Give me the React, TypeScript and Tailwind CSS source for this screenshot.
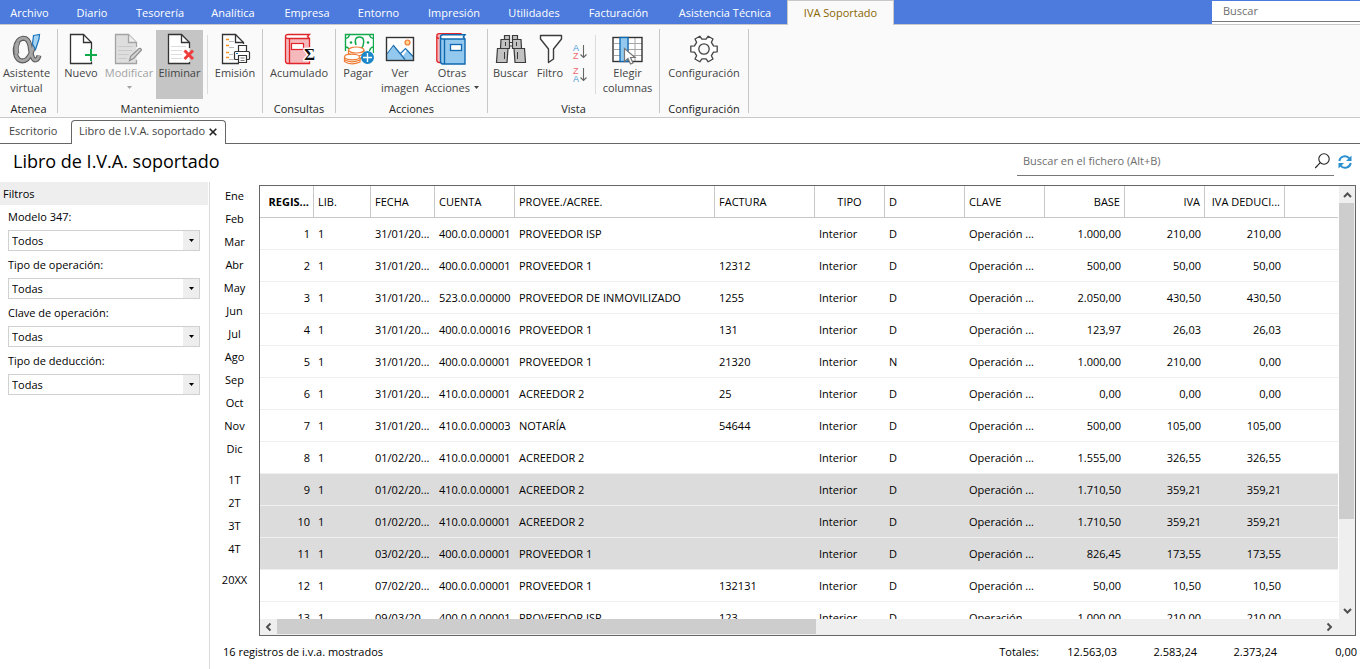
import type { ReactNode } from "react";

const menu: [string, string][] = [
  ["Archivo", "w-[59px]"],
  ["Diario", "w-[66px]"],
  ["Tesorería", "w-[70px]"],
  ["Analítica", "w-[76px]"],
  ["Empresa", "w-[72px]"],
  ["Entorno", "w-[71px]"],
  ["Impresión", "w-[80px]"],
  ["Utilidades", "w-[80px]"],
  ["Facturación", "w-[89px]"],
  ["Asistencia Técnica", "w-[124px]"],
];

const months = ["Ene", "Feb", "Mar", "Abr", "May", "Jun", "Jul", "Ago", "Sep", "Oct", "Nov", "Dic"];
const quarters = ["1T", "2T", "3T", "4T"];

const filters: [string, string, string][] = [
  ["modelo", "Modelo 347:", "Todos"],
  ["operacion", "Tipo de operación:", "Todas"],
  ["clave", "Clave de operación:", "Todas"],
  ["deduccion", "Tipo de deducción:", "Todas"],
];

type Column = { title: string; width: string; align: string };

const columns: Column[] = [
  { title: "REGIS...", width: "w-[54px]", align: "text-right font-bold" },
  { title: "LIB.", width: "w-[57px]", align: "text-left font-normal" },
  { title: "FECHA", width: "w-[64px]", align: "text-left font-normal" },
  { title: "CUENTA", width: "w-[80px]", align: "text-left font-normal" },
  { title: "PROVEE./ACREE.", width: "w-[200px]", align: "text-left font-normal" },
  { title: "FACTURA", width: "w-[100px]", align: "text-left font-normal" },
  { title: "TIPO", width: "w-[70px]", align: "text-center font-normal" },
  { title: "D", width: "w-[80px]", align: "text-left font-normal" },
  { title: "CLAVE", width: "w-[80px]", align: "text-left font-normal" },
  { title: "BASE", width: "w-[80px]", align: "text-right font-normal" },
  { title: "IVA", width: "w-[80px]", align: "text-right font-normal" },
  { title: "IVA DEDUCI...", width: "w-[80px]", align: "text-right font-normal" },
];

const rows: string[][] = [
  ["1", "31/01/20...", "400.0.0.00001", "PROVEEDOR ISP", "", "D", "1.000,00", "210,00", "210,00"],
  ["2", "31/01/20...", "400.0.0.00001", "PROVEEDOR 1", "12312", "D", "500,00", "50,00", "50,00"],
  ["3", "31/01/20...", "523.0.0.00000", "PROVEEDOR DE INMOVILIZADO", "1255", "D", "2.050,00", "430,50", "430,50"],
  ["4", "31/01/20...", "400.0.0.00016", "PROVEEDOR 1", "131", "D", "123,97", "26,03", "26,03"],
  ["5", "31/01/20...", "400.0.0.00001", "PROVEEDOR 1", "21320", "N", "1.000,00", "210,00", "0,00"],
  ["6", "31/01/20...", "410.0.0.00001", "ACREEDOR 2", "25", "D", "0,00", "0,00", "0,00"],
  ["7", "31/01/20...", "410.0.0.00003", "NOTARÍA", "54644", "D", "500,00", "105,00", "105,00"],
  ["8", "01/02/20...", "410.0.0.00001", "ACREEDOR 2", "", "D", "1.555,00", "326,55", "326,55"],
  ["9", "01/02/20...", "410.0.0.00001", "ACREEDOR 2", "", "D", "1.710,50", "359,21", "359,21"],
  ["10", "01/02/20...", "410.0.0.00001", "ACREEDOR 2", "", "D", "1.710,50", "359,21", "359,21"],
  ["11", "03/02/20...", "400.0.0.00001", "PROVEEDOR 1", "", "D", "826,45", "173,55", "173,55"],
  ["12", "07/02/20...", "400.0.0.00001", "PROVEEDOR 1", "132131", "D", "50,00", "10,50", "10,50"],
  ["13", "09/03/20...", "400.0.0.00001", "PROVEEDOR ISP", "123", "D", "1.000,00", "210,00", "210,00"],
];

const selected = ["9", "10", "11"];

function Icon({ children }: { children: ReactNode }) {
  return (
    <svg aria-hidden="true" viewBox="0 0 32 32" className="block size-8 shrink-0" fill="none">
      {children}
    </svg>
  );
}

function AssistantIcon() {
  const loop = "M25 7Q20.500 22 16 26.200Q11.500 29.500 7.500 26.500Q3.800 23 4.300 15.500Q5.500 6 12 5.200Q17.500 5 19 13Q20.500 26.500 24 27Q27 27 28 22.500";
  return (
    <Icon>
      <path d={loop} stroke="#5c5c5c" strokeWidth="5" />
      <path d={loop} stroke="#a6a6a6" strokeWidth="2.800" />
      <path d="M6 21Q4 15 7 9" stroke="#5c5c5c" strokeWidth="5" />
      <path d="M5.800 21Q4 15 6.800 9" stroke="#a6a6a6" strokeWidth="3.600" />
      <path d="M22.500 2.500L28.500 1.500 28 6 24.500 16.500 21.500 11Z" fill="#a5d3f3" stroke="#1b75bb" strokeWidth="1.200" />
    </Icon>
  );
}

function NewIcon() {
  return (
    <Icon>
      <path d="M26.500 16V9.500L18.500 1.500H5.500V30.500H26.500V28.500" fill="#fff" stroke="#333" strokeWidth="1.300" />
      <path d="M18.500 1.500V9.500H26.500" stroke="#333" strokeWidth="1.300" />
      <path d="M20 22H32M26 16V28" stroke="#12a84c" strokeWidth="2" />
    </Icon>
  );
}

function EditIcon() {
  return (
    <Icon>
      <path d="M23.500 14V9.500L15.500 1.500H2.500V30.500H23.500V27" fill="#dedede" stroke="#a3a3a3" strokeWidth="1.300" />
      <path d="M15.500 1.500V9.500H23.500" fill="#eee" stroke="#a3a3a3" strokeWidth="1.300" />
      <path d="M5 13.500H20M5 17.500H19M5 21.500H16M5 25.500H14" stroke="#c9c9c9" />
      <path d="M16.500 27.500l1.200-4.200L26 15.500q1.800-.6 2.500 1.500l-8 8.500z" fill="#d4d4d4" stroke="#8f8f8f" strokeWidth="1.200" />
    </Icon>
  );
}

function DeleteIcon() {
  return (
    <Icon>
      <path d="M25.500 15V9.500L17.500 1.500H4.500V30.500H25.500V29" fill="#fff" stroke="#333" strokeWidth="1.300" />
      <path d="M17.500 1.500V9.500H25.500" stroke="#333" strokeWidth="1.300" />
      <path d="M7 13.500H22M7 17.500H18M7 21.500H18M7 25.500H18" stroke="#dcdcdc" />
      <path d="M20.500 17.500L29 26M29 17.500L20.500 26" stroke="#ef3b3b" strokeWidth="3" />
    </Icon>
  );
}

function PrintIcon() {
  return (
    <Icon>
      <path d="M24.500 11V9.500L16.500 1.500H3.500V30.500H20" fill="#fff" stroke="#333" strokeWidth="1.300" />
      <path d="M16.500 1.500V9.500H24.500" stroke="#333" strokeWidth="1.300" />
      <path d="M7 6.500H10M7 12.500H10M7 19.500H10M7 24.500H10" stroke="#f5921e" strokeWidth="1.300" />
      <path d="M10 8.500H15M10 14.500H15M10 21.500H14M10 26.500H15" stroke="#bbb" />
      <path d="M19.500 18V12.500H27.500V18" fill="#fff" stroke="#333" strokeWidth="1.200" />
      <rect x="15.500" y="18.500" width="15" height="8" rx="1" fill="#fff" stroke="#333" strokeWidth="1.200" />
      <path d="M19.500 22.500H27.500V29.500H19.500Z" fill="#fff" stroke="#333" strokeWidth="1.200" />
      <path d="M21.500 25H25.500M21.500 27.500H25.500" stroke="#777" />
      <path d="M17 20.500H19" stroke="#1b75bb" />
    </Icon>
  );
}

function LedgerIcon() {
  return (
    <Icon>
      <path d="M2.500 4V28q0 2.500 2.500 2.500H26.500V5.500H5Q2.500 5.500 2.500 3.500T5 1.500H26.500L24.500 3.500 26.500 5.500" fill="#f5b9bb" />
      <path d="M26.500 5.500H5Q2.500 5.500 2.500 3.500T5 1.500H26.500L24.500 3.500Z" fill="#fff" />
      <path d="M26.500 14V5.500H5Q2.500 5.500 2.500 3.500T5 1.500H26.500L24.500 3.500 26.500 5.500M2.500 3.500V28q0 2.500 2.500 2.500H26.500V28M6.500 6V30" stroke="#e0262b" strokeWidth="1.300" />
      <rect x="8.500" y="10.500" width="12" height="6" fill="#fff" stroke="#e0262b" strokeWidth="1.200" />
      <text x="21" y="27" fontFamily="Liberation Serif" fontWeight="bold" fontSize="17" fill="#111" stroke="#fff" strokeWidth="2.500" paintOrder="stroke">
        Σ
      </text>
    </Icon>
  );
}

function PayIcon() {
  return (
    <Icon>
      <path d="M3.500 18V1.500H31.500V20" fill="#fff" stroke="#12a84c" strokeWidth="1.400" />
      <path d="M3.500 5.500Q7 5 7.500 1.500M31.500 5.500Q28 5 27.500 1.500M3.500 14Q6 14 7 16M31.500 14Q28.500 14 27.500 18" stroke="#12a84c" strokeWidth="1.400" />
      <path d="M14 12Q11.500 4 17.500 4T21 13L19 16" stroke="#12a84c" strokeWidth="1.500" />
      <circle cx="9" cy="9.500" r="1.300" fill="#12a84c" />
      <circle cx="26" cy="9.500" r="1.300" fill="#12a84c" />
      <g fill="#fff" stroke="#ef7b34" strokeWidth="1.200">
        <path d="M6.500 17V24Q14 29 22 24V17" />
        <path d="M6.500 20.500Q14 26 22 20.500" />
        <ellipse cx="14.300" cy="17" rx="7.700" ry="3" />
        <path d="M2.500 24V28.500Q9 33 18 29V24" />
        <path d="M2.500 26.500Q9 31 18 27" />
        <ellipse cx="10" cy="24" rx="7.500" ry="2.800" />
      </g>
      <circle cx="25.500" cy="24.500" r="6.500" fill="#1b87c9" />
      <path d="M21 24.500H30M25.500 20V29" stroke="#fff" strokeWidth="1.400" />
    </Icon>
  );
}

function ImageIcon() {
  return (
    <Icon>
      <rect x="2.500" y="4.500" width="27" height="23" fill="#fff" />
      <path d="M3 22L10 13 19 23 23.500 16.500 29 23V27H3Z" fill="#93c9ee" />
      <path d="M3 21L9.500 12.500 21 26.500M16.500 20.500L21.500 15.500 29 23.500" stroke="#1b6fb3" strokeWidth="1.200" />
      <circle cx="23.500" cy="9.500" r="2.500" fill="#ffd28a" stroke="#ef7b34" strokeWidth="1.200" />
      <rect x="2.500" y="4.500" width="27" height="23" stroke="#333" strokeWidth="1.400" />
    </Icon>
  );
}

function BooksIcon() {
  return (
    <Icon>
      <path d="M.8 3V27q0 2.500 2.500 2.500H25V.7H3Q.8 .7 .8 3T3 5.500" fill="#f5b9bb" stroke="#e0262b" strokeWidth="1.300" />
      <path d="M4.500 4V28q0 3 2.500 3H29V6H7Q4.500 6 4.500 4" fill="#93c9ee" />
      <path d="M29 6H7Q4.500 6 4.500 4T7 1.800H29L27.300 4Z" fill="#fff" />
      <path d="M29 6H7Q4.500 6 4.500 4T7 1.800H29L27.300 4 29 6V31H7Q4.500 31 4.500 28V4M8.500 6V31" stroke="#1068b0" strokeWidth="1.400" />
      <rect x="14.500" y="11.500" width="11" height="6" fill="#fff" stroke="#1068b0" strokeWidth="1.300" />
    </Icon>
  );
}

function BinocularsIcon() {
  return (
    <Icon>
      <g fill="#c2c2c2" stroke="#3b3b3b" strokeWidth="1.200">
        <path d="M9.500 2.500H14.500V6.500H9.500ZM17.500 2.500H22.500V6.500H17.500Z" />
        <path d="M14 9.500H18V13H14Z" fill="#fff" />
        <path d="M6 6.500H14.500V15.500H5.500ZM17.500 6.500H26L26.500 15.500H17.500Z" />
        <path d="M2.500 15.500H13L12 29.500H1.500ZM19 15.500H29.500L30.500 29.500H20Z" />
      </g>
      <path d="M9.500 19V26M22.500 19V26M10.500 9V13M21.500 9V13" stroke="#3b3b3b" />
    </Icon>
  );
}

function FunnelIcon() {
  return (
    <Icon>
      <path d="M6.500 2.500H27.500V6L19.500 16V26L14.500 29.500V16L6.500 6Z" fill="#fff" stroke="#3b3b3b" strokeWidth="1.400" strokeLinejoin="round" />
    </Icon>
  );
}

function ColumnsIcon() {
  return (
    <Icon>
      <rect x="1" y="4.500" width="29" height="24" fill="#fff" />
      <path d="M2 10.500H30M2 16.500H30M2 22.500H30M16 5V28M23 5V28" stroke="#a6a6a6" />
      <rect x="1" y="4.500" width="29" height="24" stroke="#333" strokeWidth="1.400" />
      <rect x="8" y="4.500" width="8" height="24" fill="#93c9ee" stroke="#1068b0" strokeWidth="1.300" />
      <path d="M12.500 15.500V28.500L16 25.500 18.500 31 21 30 18.500 24.500H23Z" fill="#fff" stroke="#777" strokeWidth="1.200" />
    </Icon>
  );
}

function gearPath() {
  const at = (r: number, deg: number) => {
    const a = (deg * Math.PI) / 180;
    return `${(16 + r * Math.cos(a)).toFixed(1)} ${(16 + r * Math.sin(a)).toFixed(1)}`;
  };
  const teeth = [0, 60, 120, 180, 240, 300].map(
    (d) => `${at(10, d - 18)}L${at(13.5, d - 12)}L${at(13.5, d + 12)}L${at(10, d + 18)}`
  );
  return `M${teeth.join("L")}Z`;
}

function GearIcon() {
  return (
    <Icon>
      <path d={gearPath()} fill="#fff" stroke="#444" strokeWidth="1.300" strokeLinejoin="round" />
      <circle cx="16" cy="16" r="5.200" fill="#fafafa" stroke="#444" strokeWidth="1.300" />
    </Icon>
  );
}

function SortIcon({ top, bottom, topColor, bottomColor }: { top: string; bottom: string; topColor: string; bottomColor: string }) {
  return (
    <svg aria-hidden="true" viewBox="0 0 16 17" className="block h-[17px] w-4" fontFamily="Liberation Sans" fontSize="9">
      <text x="0" y="8" fill={topColor}>{top}</text>
      <text x="0" y="16" fill={bottomColor}>{bottom}</text>
      <path d="M10.500 2V14.500M7.500 11.500L10.500 14.500 13.500 11.500" fill="none" stroke="#666" strokeWidth="1.100" />
    </svg>
  );
}

function Caret({ className }: { className: string }) {
  return (
    <svg aria-hidden="true" viewBox="0 0 5 3" className={className}>
      <path d="M0 0H5L2.500 3Z" fill="currentColor" />
    </svg>
  );
}

function Tool({ icon, width, lines, look = "text-[#444]", caret }: { icon: ReactNode; width: string; lines: string[]; look?: string; caret?: "below" | "inline" }) {
  return (
    <button type="button" className={`flex h-[69px] shrink-0 flex-col items-center pt-[3px] leading-[15px] ${width} ${look}`}>
      {icon}
      {lines.map((line, i) => (
        <span key={line} className="flex items-center whitespace-nowrap">
          {line}
          {caret === "inline" && i === lines.length - 1 && <Caret className="ml-1 h-[3px] w-[5px]" />}
        </span>
      ))}
      {caret === "below" && <Caret className="mt-[6px] h-[3px] w-[5px]" />}
    </button>
  );
}

function Group({ label, children }: { label: string; children: ReactNode }) {
  return (
    <section className="flex">
      <div className="flex flex-col pt-[5px]">
        <div className="flex">{children}</div>
        <h2 className="mt-[2px] text-center leading-[15px] text-[#1e1e1e]">{label}</h2>
      </div>
      <div className="mt-1 h-[84px] w-px bg-[#c8c8c8]" />
    </section>
  );
}

function Divider() {
  return <div className="mt-[5px] h-[59px] w-px bg-[#dcdcdc]" />;
}

function Chevron({ turn }: { turn: string }) {
  return (
    <svg aria-hidden="true" viewBox="0 0 9 6" className={`h-[6px] w-[9px] ${turn}`} fill="none">
      <path d="M1 5L4.500 1.500 8 5" stroke="#505050" strokeWidth="2" />
    </svg>
  );
}

function Ribbon() {
  return (
    <div className="flex h-[93px] shrink-0 border-b border-[#c8c8c8] bg-[#fafafa] text-[11px]">
      <Group label="Atenea">
        <Tool icon={<AssistantIcon />} width="w-[57px] pr-1" lines={["Asistente", "virtual"]} />
      </Group>
      <Group label="Mantenimiento">
        <Tool icon={<NewIcon />} width="w-[46px]" lines={["Nuevo"]} />
        <Tool icon={<EditIcon />} width="w-[52px] pr-0.5" lines={["Modificar"]} look="text-[#a3a3a3]" caret="below" />
        <Tool icon={<DeleteIcon />} width="w-[47px]" lines={["Eliminar"]} look="bg-[#c5c5c5] text-[#444]" />
        <div className="w-1" />
        <Divider />
        <Tool icon={<PrintIcon />} width="w-[54px]" lines={["Emisión"]} />
      </Group>
      <Group label="Consultas">
        <Tool icon={<LedgerIcon />} width="w-[72px]" lines={["Acumulado"]} />
      </Group>
      <Group label="Acciones">
        <Tool icon={<PayIcon />} width="w-[44px]" lines={["Pagar"]} />
        <Tool icon={<ImageIcon />} width="w-[40px]" lines={["Ver", "imagen"]} />
        <Tool icon={<BooksIcon />} width="w-[67px] pr-[3px]" lines={["Otras", "Acciones"]} caret="inline" />
      </Group>
      <Group label="Vista">
        <Tool icon={<BinocularsIcon />} width="w-[45px]" lines={["Buscar"]} />
        <Tool icon={<FunnelIcon />} width="w-[34px]" lines={["Filtro"]} />
        <div className="flex w-[28px] flex-col items-center gap-[6px] pt-[13px]">
          <button type="button" aria-label="Orden ascendente">
            <SortIcon top="A" bottom="Z" topColor="#4a9bd8" bottomColor="#ee6b6f" />
          </button>
          <button type="button" aria-label="Orden descendente">
            <SortIcon top="Z" bottom="A" topColor="#ee6b6f" bottomColor="#4a9bd8" />
          </button>
        </div>
        <Divider />
        <Tool icon={<ColumnsIcon />} width="w-[63px]" lines={["Elegir", "columnas"]} />
      </Group>
      <Group label="Configuración">
        <Tool icon={<GearIcon />} width="w-[88px]" lines={["Configuración"]} />
      </Group>
    </div>
  );
}

function Filters() {
  return (
    <aside className="w-[210px] shrink-0 border-r border-[#d9d9d9]">
      <h2 className="mr-px bg-[#eee] px-[3px] leading-[23px]">Filtros</h2>
      <div className="flex flex-col gap-[6px] pl-2 pr-[9px] pt-1">
        {filters.map(([id, label, value]) => (
          <div key={id} className="flex flex-col">
            <label htmlFor={id} className="leading-4">{label}</label>
            <div className="relative mt-[5px] flex">
              <select id={id} className="h-[21px] w-full appearance-none border border-[#d0d0d0] bg-white px-[3px] leading-[19px]">
                <option>{value}</option>
              </select>
              <span className="pointer-events-none absolute inset-y-px right-px flex w-4 items-center justify-center bg-[#eee]">
                <Caret className="h-[3px] w-[5px]" />
              </span>
            </div>
          </div>
        ))}
      </div>
    </aside>
  );
}

function PeriodButton({ label }: { label: string }) {
  return (
    <button type="button" className="h-[23px] w-full">
      {label}
    </button>
  );
}

function cells(row: string[]) {
  const [num, date, account, name, invoice, d, base, iva, ded] = row;
  return [num, "1", date, account, name, invoice, "Interior", d, "Operación ...", base, iva, ded];
}

function Grid() {
  return (
    <div className="mr-1 flex min-h-0 flex-1 flex-col border border-[#666]">
      <div className="flex min-h-0 flex-1">
        <div className="min-w-0 flex-1 overflow-hidden">
          <table className="w-full table-fixed border-separate border-spacing-0 whitespace-nowrap">
            <thead>
              <tr className="h-8">
                {columns.map((c) => (
                  <th key={c.title} scope="col" className={`border-b border-r border-[#c8c8c8] px-1 pt-0.5 ${c.width} ${c.align}`}>
                    {c.title}
                  </th>
                ))}
                <td className="border-b border-[#c8c8c8]" />
              </tr>
            </thead>
            <tbody>
              {rows.map((row) => (
                <tr key={row[0]} className={selected.includes(row[0]) ? "h-8 bg-[#dcdcdc]" : "h-8"}>
                  {cells(row).map((value, i) => (
                    <td key={i} className={`border-b border-[#efefef] px-1 pt-0.5 ${i === 0 || i > 8 ? "text-right" : "text-left"}`}>
                      {value}
                    </td>
                  ))}
                  <td className="border-b border-[#efefef]" />
                </tr>
              ))}
            </tbody>
          </table>
        </div>
        <div className="flex w-[17px] shrink-0 flex-col items-center border-l border-white bg-[#efefef]">
          <button type="button" aria-label="Subir" className="flex h-[17px] w-full shrink-0 items-center justify-center">
            <Chevron turn="rotate-0" />
          </button>
          <div className="h-[73%] w-[15px] self-start bg-[#cdcdcd]" />
          <div className="flex-1" />
          <button type="button" aria-label="Bajar" className="flex h-[17px] w-full shrink-0 items-center justify-center">
            <Chevron turn="rotate-180" />
          </button>
        </div>
      </div>
      <div className="flex h-4 shrink-0 bg-[#efefef] pr-[17px]">
        <button type="button" aria-label="Izquierda" className="flex w-[17px] shrink-0 items-center justify-center">
          <Chevron turn="-rotate-90" />
        </button>
        <div className="h-[15px] w-1/2 bg-[#cdcdcd]" />
        <div className="flex-1" />
        <button type="button" aria-label="Derecha" className="flex w-[17px] shrink-0 items-center justify-center">
          <Chevron turn="rotate-90" />
        </button>
      </div>
    </div>
  );
}

export default function App() {
  return (
    <div className="flex h-screen flex-col overflow-hidden bg-white font-['Open_Sans','Noto_Sans',sans-serif] text-[11px] text-black">
      <header className="flex h-[25px] shrink-0 bg-[#4d7bdd] text-white">
        <nav className="flex min-w-0 flex-1 border-b border-[#c8c8c8]">
          {menu.map(([label, width]) => (
            <a key={label} href="#" className={`shrink-0 whitespace-nowrap text-center leading-[26px] ${width}`}>
              {label}
            </a>
          ))}
          <a href="#" className="-mb-px w-[107px] shrink-0 border-x border-t border-[#c8c8c8] bg-[#fafafa] text-center leading-[24px] text-[#8a6500]">
            IVA Soportado
          </a>
        </nav>
        <div className="w-[148px] shrink-0 border-b border-[#c8c8c8] bg-white">
          <input aria-label="Buscar" placeholder="Buscar" className="block h-[22px] w-full border-b border-t border-b-[#777] border-t-[#4d7bdd] px-[11px] pb-px placeholder:text-[#6e6e6e]" />
        </div>
      </header>
      <Ribbon />
      <div className="flex h-[26px] shrink-0 items-end">
        <a href="#" className="h-[26px] w-[71px] border-b border-[#666] pl-[9px] leading-[25px] text-[#444]">
          Escritorio
        </a>
        <div className="flex h-6 w-[155px] items-center rounded-t-[4px] border-x border-t border-[#666] pb-0.5 pl-[7px] text-[#444]">
          <a href="#" className="whitespace-nowrap">Libro de I.V.A. soportado</a>
          <button type="button" aria-label="Cerrar" className="ml-1">
            <svg aria-hidden="true" viewBox="0 0 8 8" className="size-2">
              <path d="M.7 .7L7.300 7.300M7.300 .7L.7 7.300" stroke="#222" strokeWidth="1.600" />
            </svg>
          </button>
        </div>
        <div className="flex-1 self-stretch border-b border-[#666]" />
      </div>
      <div className="flex h-[38px] shrink-0 items-start justify-between pl-[13px] pr-2">
        <h1 className="text-[18px] leading-[34px]">Libro de I.V.A. soportado</h1>
        <div className="flex items-center">
          <div className="flex h-8 w-[317px] items-center border-b border-[#777] pl-[6px] pr-1 pt-[3px]">
            <input aria-label="Buscar en el fichero" placeholder="Buscar en el fichero (Alt+B)" className="min-w-0 flex-1 placeholder:text-[#6e6e6e]" />
            <button type="button" aria-label="Buscar">
              <svg aria-hidden="true" viewBox="0 0 16 16" className="size-4" fill="none" stroke="#222" strokeWidth="1.100">
                <circle cx="10" cy="6" r="5.200" />
                <path d="M6.300 9.700L1.200 15" />
              </svg>
            </button>
          </div>
          <button type="button" aria-label="Actualizar" className="ml-1 pt-[3px]">
            <svg aria-hidden="true" viewBox="0 0 14 14" className="size-[14px]" fill="none" stroke="#2b8fd0" strokeWidth="2">
              <path d="M1.300 6A5.700 5.700 0 0 1 11.500 3.500M12.700 8A5.700 5.700 0 0 1 2.500 10.500" />
              <path d="M13.500 .5V6H8ZM.5 13.500V8H6Z" fill="#2b8fd0" stroke="none" />
            </svg>
          </button>
        </div>
      </div>
      <main className="flex min-h-0 flex-1">
        <Filters />
        <nav className="w-[49px] shrink-0 pt-[3px] text-center">
          {months.map((m) => (
            <PeriodButton key={m} label={m} />
          ))}
          <div className="py-2">
            {quarters.map((q) => (
              <PeriodButton key={q} label={q} />
            ))}
          </div>
          <PeriodButton label="20XX" />
        </nav>
        <div className="flex min-w-0 flex-1 flex-col pt-[3px]">
          <Grid />
          <footer className="-ml-9 flex h-[33px] shrink-0 items-center pr-[3px]">
            <p className="flex-1">16 registros de i.v.a. mostrados</p>
            <p>Totales:</p>
            <p className="w-[78px] text-right">12.563,03</p>
            <p className="w-20 text-right">2.583,24</p>
            <p className="w-20 text-right">2.373,24</p>
            <p className="w-20 text-right">0,00</p>
          </footer>
        </div>
      </main>
    </div>
  );
}
